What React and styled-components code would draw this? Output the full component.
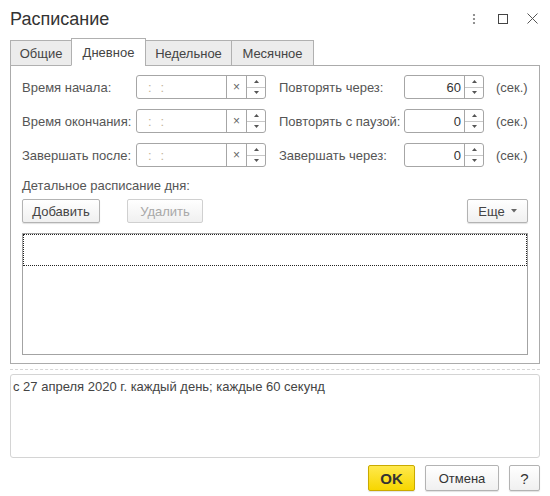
import React from "react";
import styled, { createGlobalStyle } from "styled-components";

const Global = createGlobalStyle`
  html, body { margin: 0; padding: 0; background: #fff; }
  body { font-family: "Liberation Sans", Arial, sans-serif; font-size: 13px; color: #4d4d4d; }
  * { box-sizing: border-box; }
`;

const Window = styled.div`
  width: 550px;
  height: 496px;
  padding: 0 10px;
  display: flex;
  flex-direction: column;
`;

const TitleBar = styled.div`
  height: 37px;
  display: flex;
  align-items: center;
  justify-content: space-between;
`;

const Title = styled.div`
  font-size: 18px;
  color: #333;
  padding-top: 1px;
`;

const WinIcons = styled.div`
  display: flex;
  align-items: center;
  margin-right: -6px;
`;

const WinIcon = styled.div`
  width: ${(p) => p.w || 28}px;
  height: 20px;
  display: flex;
  align-items: center;
  justify-content: center;
`;

const TabBar = styled.div`
  display: flex;
  align-items: flex-end;
  height: 29px;
  margin-bottom: -1px;
  position: relative;
  z-index: 1;
`;

const Tab = styled.div`
  height: ${(p) => (p.active ? 28 : 26)}px;
  display: flex;
  align-items: center;
  justify-content: center;
  border: 1px solid #b0b0b0;
  border-bottom: ${(p) => (p.active ? "1px solid #fff" : "1px solid #b0b0b0")};
  margin-left: ${(p) => (p.first ? 0 : -1)}px;
  background: ${(p) => (p.active ? "#fff" : "#ececec")};
  color: #444;
  width: ${(p) => p.w}px;
  padding-top: ${(p) => (p.active ? 0 : 1)}px;
`;

const Panel = styled.div`
  border: 1px solid #ababab;
  padding: 9px 11px 8px 11px;
  display: flex;
  flex-direction: column;
`;

const FormGrid = styled.div`
  display: grid;
  grid-template-columns: 114px 130px 13px 125px 80px auto;
  grid-auto-rows: 24px;
  row-gap: 10px;
  align-items: center;
`;

const Label = styled.div`
  color: #555;
  white-space: nowrap;
  grid-column: ${(p) => p.col};
`;

const Unit = styled.div`
  color: #555;
  padding-left: 12px;
`;

const Field = styled.div`
  height: 24px;
  border: 1px solid #a6a6a6;
  border-radius: 3px;
  display: flex;
  background: #fff;
  grid-column: ${(p) => p.col};
  overflow: hidden;
`;

const FieldText = styled.div`
  flex: 1;
  display: flex;
  align-items: center;
  justify-content: ${(p) => (p.right ? "flex-end" : "flex-start")};
  padding: 0 ${(p) => (p.right ? 3 : 10)}px;
  color: #333;
  font-size: 13px;
`;

const Colons = styled.span`
  color: #c4b49a;
  letter-spacing: 9px;
  padding-left: 1px;
`;

const ClearBtn = styled.div`
  width: 20px;
  border-left: 1px solid #a6a6a6;
  display: flex;
  align-items: center;
  justify-content: center;
  color: #666;
  font-size: 12px;
`;

const Spin = styled.div`
  width: 19px;
  border-left: 1px solid #a6a6a6;
  display: flex;
  flex-direction: column;
`;

const SpinHalf = styled.div`
  flex: 1;
  display: flex;
  align-items: center;
  justify-content: center;
  border-top: ${(p) => (p.bottom ? "1px solid #c8c8c8" : "none")};
`;

const SectionLabel = styled.div`
  color: #555;
  margin-top: 10px;
  height: 18px;
  line-height: 18px;
`;

const ButtonRow = styled.div`
  display: flex;
  align-items: center;
  margin-top: 4px;
  gap: 27px;
`;

const Button = styled.div`
  height: 24px;
  width: ${(p) => p.w}px;
  display: flex;
  align-items: center;
  justify-content: center;
  gap: 6px;
  border: 1px solid ${(p) => (p.disabled ? "#d0d0d0" : "#b3b3b3")};
  border-radius: 2px;
  background: linear-gradient(#ffffff, #f0f0f0);
  box-shadow: ${(p) => (p.disabled ? "none" : "0 1px 1px rgba(0,0,0,0.12)")};
  color: ${(p) => (p.disabled ? "#a8a8a8" : "#444")};
  margin-left: ${(p) => (p.right ? "auto" : "0")};
`;

const Table = styled.div`
  margin-top: 10px;
  height: 122px;
  border: 1px solid #a3a3a3;
  display: flex;
  flex-direction: column;
`;

const TableRow = styled.div`
  height: 32px;
  border: 1px dotted #222;
`;

const Separator = styled.div`
  margin-top: 5px;
  border-top: 1px dashed #d6d6d6;
  height: 0;
`;

const InfoBox = styled.div`
  margin-top: 4px;
  height: 84px;
  border: 1px solid #d4d4d4;
  border-radius: 3px;
  padding: 4px 2px;
  color: #444;
`;

const Footer = styled.div`
  display: flex;
  justify-content: flex-end;
  gap: 10px;
  margin-top: 7px;
`;

const FootButton = styled.div`
  height: 26px;
  width: ${(p) => p.w}px;
  display: flex;
  align-items: center;
  justify-content: center;
  border-radius: 2px;
  border: 1px solid ${(p) => (p.primary ? "#c9aa00" : "#b3b3b3")};
  background: ${(p) => (p.primary ? "linear-gradient(#ffe94d, #f7d600)" : "linear-gradient(#ffffff, #f0f0f0)")};
  box-shadow: 0 1px 1px rgba(0,0,0,0.12);
  color: #333;
  font-weight: ${(p) => (p.primary ? "bold" : "normal")};
  font-size: ${(p) => (p.big ? 15 : 13)}px;
`;

const Up = () => (
  <svg width="5" height="3" viewBox="0 0 5 3"><path d="M0 3 L2.5 0 L5 3Z" fill="#555" /></svg>
);
const Down = () => (
  <svg width="5" height="3" viewBox="0 0 5 3"><path d="M0 0 L2.5 3 L5 0Z" fill="#555" /></svg>
);

const SpinBox = () => (
  <Spin>
    <SpinHalf><Up /></SpinHalf>
    <SpinHalf bottom><Down /></SpinHalf>
  </Spin>
);

const TimeField = () => (
  <Field col={2}>
    <FieldText><Colons>::</Colons></FieldText>
    <ClearBtn>×</ClearBtn>
    <SpinBox />
  </Field>
);

const NumField = ({ v }) => (
  <Field col={5}>
    <FieldText right>{v}</FieldText>
    <SpinBox />
  </Field>
);

const rows = [
  ["Время начала:", "Повторять через:", "60"],
  ["Время окончания:", "Повторять с паузой:", "0"],
  ["Завершать после:", "Завершать через:", "0"],
];

export default function App() {
  return (
    <>
      <Global />
      <Window>
        <TitleBar>
          <Title>Расписание</Title>
          <WinIcons>
            <WinIcon>
              <svg width="4" height="12" viewBox="0 0 4 12">
                <circle cx="2" cy="2" r="1.1" fill="#777" />
                <circle cx="2" cy="6" r="1.1" fill="#777" />
                <circle cx="2" cy="10" r="1.1" fill="#777" />
              </svg>
            </WinIcon>
            <WinIcon w={30}>
              <svg width="10" height="10" viewBox="0 0 10 10">
                <rect x="0.5" y="0.5" width="9" height="9" fill="none" stroke="#444" strokeWidth="1" />
              </svg>
            </WinIcon>
            <WinIcon w={28}>
              <svg width="11" height="11" viewBox="0 0 11 11">
                <path d="M0.5 0.5 L10.5 10.5 M10.5 0.5 L0.5 10.5" stroke="#555" strokeWidth="1" />
              </svg>
            </WinIcon>
          </WinIcons>
        </TitleBar>
        <TabBar>
          <Tab first w={62}>Общие</Tab>
          <Tab active w={75}>Дневное</Tab>
          <Tab w={87}>Недельное</Tab>
          <Tab w={83}>Месячное</Tab>
        </TabBar>
        <Panel>
          <FormGrid>
            {rows.map(([l1, l2, v]) => (
              <React.Fragment key={l1}>
                <Label col={1}>{l1}</Label>
                <TimeField />
                <Label col={4}>{l2}</Label>
                <NumField v={v} />
                <Unit>(сек.)</Unit>
              </React.Fragment>
            ))}
          </FormGrid>
          <SectionLabel>Детальное расписание дня:</SectionLabel>
          <ButtonRow>
            <Button w={78}>Добавить</Button>
            <Button w={76} disabled>Удалить</Button>
            <Button w={61} right>
              Еще
              <svg width="6" height="4" viewBox="0 0 6 4"><path d="M0 0 L3 3.5 L6 0Z" fill="#666" /></svg>
            </Button>
          </ButtonRow>
          <Table>
            <TableRow />
          </Table>
        </Panel>
        <Separator />
        <InfoBox>с 27 апреля 2020 г. каждый день; каждые 60 секунд</InfoBox>
        <Footer>
          <FootButton primary big w={47}>OK</FootButton>
          <FootButton w={74}>Отмена</FootButton>
          <FootButton big w={31}>?</FootButton>
        </Footer>
      </Window>
    </>
  );
}
